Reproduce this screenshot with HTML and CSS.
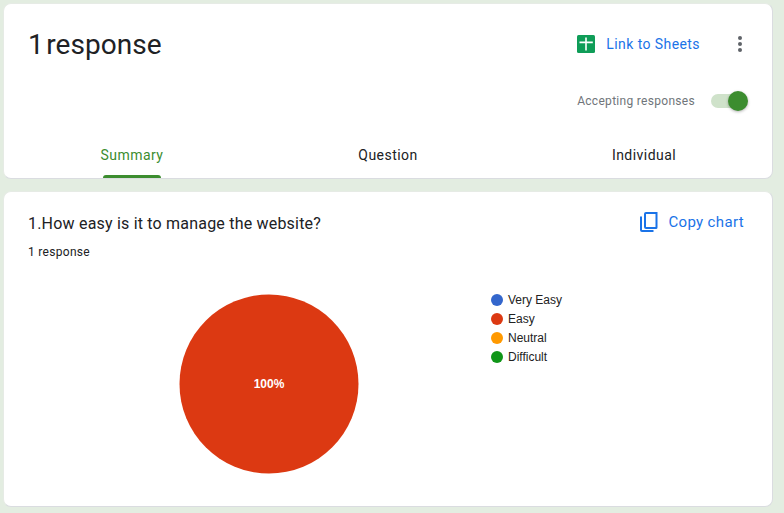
FILE: index.html
```html
<!DOCTYPE html>
<html lang="en">
<head>
  <meta charset="UTF-8">
  <meta name="viewport" content="width=device-width, initial-scale=1.0">
  <title>Responses</title>
  <link rel="stylesheet" href="styles.css">
</head>
<body>

  <section class="card head-card">
    <div class="head-top">
      <h1 class="count">1 response</h1>
      <a class="sheets-link">
        <svg class="sheets-icon" width="18" height="18" viewBox="0 0 18 18">
          <rect width="18" height="18" rx="1.5" fill="#0f9d58"/>
          <path d="M8.200 2.500h1.600v4h6v1.800h-6v7.200H8.200V8.300H2.500V6.500h5.700z" fill="#fff"/>
        </svg>
        <span>Link to Sheets</span>
      </a>
      <svg class="more-icon" width="6" height="16" viewBox="0 0 6 16">
        <circle cx="3" cy="2" r="2" fill="#5f6368"/>
        <circle cx="3" cy="8" r="2" fill="#5f6368"/>
        <circle cx="3" cy="14" r="2" fill="#5f6368"/>
      </svg>
    </div>

    <div class="accepting">
      <span class="accepting-label">Accepting responses</span>
      <div class="switch"><div class="switch-knob"></div></div>
    </div>

    <nav class="tabs">
      <div class="tab tab-active">Summary<span class="tab-bar"></span></div>
      <div class="tab">Question</div>
      <div class="tab">Individual</div>
    </nav>
  </section>

  <section class="card chart-card">
    <div class="chart-top">
      <div>
        <h2 class="question">1.How easy is it to manage the website?</h2>
        <p class="answers">1 response</p>
      </div>
      <a class="copy-link">
        <svg width="18" height="20" viewBox="0 0 18 20">
          <path d="M6 1h10.500v14.500a.5.5 0 0 1-.5.5H6a1 1 0 0 1-1-1V2a1 1 0 0 1 1-1z" fill="none" stroke="#1a73e8" stroke-width="2"/>
          <path d="M1 4.500V18a1 1 0 0 0 1 1h11.500" fill="none" stroke="#1a73e8" stroke-width="2"/>
        </svg>
        <span>Copy chart</span>
      </a>
    </div>

    <div class="chart-body">
      <svg class="pie" width="180" height="180" viewBox="0 0 180 180">
        <circle cx="90" cy="90" r="89.5" fill="#dc3912"/>
        <text x="90" y="94" text-anchor="middle" class="pie-label">100%</text>
      </svg>
      <ul class="legend">
        <li><i class="dot dot-blue"></i>Very Easy</li>
        <li><i class="dot dot-red"></i>Easy</li>
        <li><i class="dot dot-orange"></i>Neutral</li>
        <li><i class="dot dot-green"></i>Difficult</li>
      </ul>
    </div>
  </section>

</body>
</html>
```

FILE: styles.css
```css
body {
  font-family: Roboto, Arial, sans-serif;
  background-color: #e3ede1;
  margin: 0;
  padding: 3px 11px 0 3px;
  height: 513px;
  box-sizing: border-box;
  overflow: hidden;
}

.card {
  background-color: #fff;
  border: 1px solid #dadce0;
  border-top-color: #e6ebe5;
  border-left-color: #e6ebe5;
  border-radius: 8px;
  box-sizing: border-box;
}

.head-card {
  height: 176px;
  padding: 0 23px 0 24px;
}

.head-top {
  display: flex;
  align-items: center;
  height: 80px;
}

.count {
  font-size: 28px;
  font-weight: 400;
  word-spacing: -4.5px;
  letter-spacing: 0.05px;
  color: #202124;
  margin: 0 auto 0 0;
}

.sheets-link {
  display: flex;
  align-items: center;
  gap: 11px;
  color: #1a73e8;
  font-size: 14px;
  font-weight: 400;
  letter-spacing: 0.42px;
}

.more-icon {
  margin-left: 37px;
  margin-right: 6px;
}

.accepting {
  display: flex;
  align-items: center;
  justify-content: flex-end;
  height: 34px;
  padding-right: 2px;
}

.accepting-label {
  color: #70757a;
  font-size: 12px;
  letter-spacing: 0.3px;
  margin-right: 16px;
}

.switch {
  width: 36px;
  height: 14px;
  border-radius: 7px;
  background-color: #cfe2ca;
  position: relative;
}

.switch-knob {
  position: absolute;
  right: -1px;
  top: -3px;
  width: 20px;
  height: 20px;
  border-radius: 50%;
  background-color: #3c8d2f;
  box-shadow: 0 1px 3px rgba(0, 0, 0, 0.3);
}

.tabs {
  display: grid;
  grid-template-columns: repeat(3, 1fr);
  margin: 0 -23px 0 -24px;
  height: 60px;
}

.tab {
  position: relative;
  text-align: center;
  padding-top: 29px;
  font-size: 14px;
  font-weight: 400;
  color: #202124;
  letter-spacing: 0.45px;
}

.tab-active {
  color: #3c8d2f;
}

.tab-bar {
  position: absolute;
  left: 50%;
  bottom: 0;
  width: 58px;
  margin-left: -29px;
  height: 3px;
  border-radius: 3px 3px 0 0;
  background-color: #3c8d2f;
}

.chart-card {
  height: 316px;
  margin-top: 12px;
  padding: 21px 28px 0 24px;
}

.chart-top {
  display: flex;
  justify-content: space-between;
  align-items: flex-start;
}

.question {
  font-size: 16px;
  font-weight: 400;
  letter-spacing: 0.2px;
  color: #202124;
  margin: 0;
  line-height: 22px;
}

.answers {
  font-size: 12px;
  letter-spacing: 0.3px;
  color: #202124;
  margin: 8px 0 0;
  line-height: 18px;
}

.copy-link {
  display: flex;
  align-items: center;
  gap: 10px;
  margin-top: -1px;
  color: #1a73e8;
  font-size: 15px;
  font-weight: 400;
  letter-spacing: 0.35px;
}

.chart-body {
  display: flex;
  align-items: flex-start;
  margin-top: 29px;
  padding-left: 151px;
}

.pie {
  margin-top: 4px;
}

.pie-label {
  font-family: "Liberation Sans", Arial, sans-serif;
  font-size: 12px;
  font-weight: 700;
  fill: #fff;
}

.legend {
  list-style: none;
  margin: 0 0 0 132px;
  padding: 0;
  font-family: "Liberation Sans", Arial, sans-serif;
  font-size: 12px;
  color: #222;
}

.legend li {
  display: flex;
  align-items: center;
  height: 19px;
}

.dot {
  width: 12px;
  height: 12px;
  border-radius: 50%;
  margin-right: 5px;
}

.dot-blue { background-color: #3366cc; }
.dot-red { background-color: #dc3912; }
.dot-orange { background-color: #ff9900; }
.dot-green { background-color: #109618; }
```
